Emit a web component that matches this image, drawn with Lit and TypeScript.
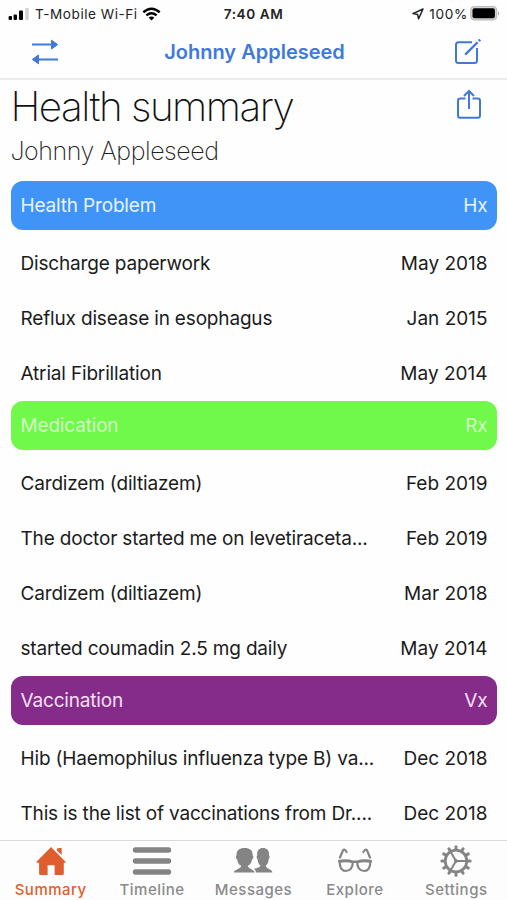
import { LitElement, html, css, svg } from "lit";
import { customElement, property } from "lit/decorators.js";

interface Entry { text: string; date: string; }
interface Group { name: string; code: string; tone: string; entries: Entry[]; }

const GROUPS: Group[] = [
  { name: "Health Problem", code: "Hx", tone: "blue", entries: [
    { text: "Discharge paperwork", date: "May 2018" },
    { text: "Reflux disease in esophagus", date: "Jan 2015" },
    { text: "Atrial Fibrillation", date: "May 2014" },
  ] },
  { name: "Medication", code: "Rx", tone: "green", entries: [
    { text: "Cardizem (diltiazem)", date: "Feb 2019" },
    { text: "The doctor started me on levetiraceta...", date: "Feb 2019" },
    { text: "Cardizem (diltiazem)", date: "Mar 2018" },
    { text: "started coumadin 2.5 mg daily", date: "May 2014" },
  ] },
  { name: "Vaccination", code: "Vx", tone: "purple", entries: [
    { text: "Hib (Haemophilus influenza type B) va...", date: "Dec 2018" },
    { text: "This is the list of vaccinations from Dr....", date: "Dec 2018" },
  ] },
];

@customElement("status-bar")
class StatusBar extends LitElement {
  static styles = css`
    :host { display: grid; grid-template-columns: 1fr auto 1fr; align-items: center; height: 27px; box-sizing: border-box; padding: 0 7px 0 7px; font-size: 13.6px; color: #222; white-space: nowrap; }
    .side { display: flex; align-items: center; }
    .right { justify-content: flex-end; }
    .time { font-weight: 600; font-size: 13.6px; letter-spacing: 0.55px; }
    .carrier { margin: 0 4px 0 6px; letter-spacing: 0.52px; }
    .percent { margin: 0 2px 0 5px; letter-spacing: 0.7px; }
    svg { display: block; flex: none; }
  `;
  render() {
    return html`
      <div class="side">
        <svg width="22" height="14" viewBox="0 0 22 14">
          <rect x="1.6" y="9" width="3.4" height="4" rx="1"/><rect x="6.6" y="7.4" width="3.4" height="5.6" rx="1"/>
          <rect x="12" y="3.4" width="4" height="9.6" rx="1"/><rect x="18.2" y="1" width="3.6" height="12" rx="1" fill="#d2d2d2"/>
        </svg>
        <span class="carrier">T-Mobile Wi-Fi</span>
        <svg width="19" height="14" viewBox="0 0 19 14" fill="none" stroke="#000" stroke-width="2.5">
          <path d="M1.3 5.2Q9.5 -1.7 17.7 5.2"/><path d="M4.4 8.4Q9.5 4.2 14.6 8.4"/><path d="M9.5 13.4L6.6 10.5Q9.5 8.4 12.4 10.5Z" fill="#000" stroke="none"/>
        </svg>
      </div>
      <span class="time">7:40 AM</span>
      <div class="side right">
        <svg width="12" height="12" viewBox="0 0 12 12" fill="none" stroke="#222" stroke-width="1.5" stroke-linejoin="round"><path d="M11 1L1 5.6L5.6 6.4L6.6 10.8Z"/></svg>
        <span class="percent">100%</span>
        <svg width="30" height="15" viewBox="0 0 30 15"><rect x=".7" y=".4" width="26" height="13.6" rx="3.6" fill="#d4d4d4" stroke="#b4b4b4" stroke-width="1"/><rect x="2.5" y="2.2" width="22.4" height="10" rx="2" fill="#000"/><path d="M28 5Q30.2 7.3 28 9.8Z" fill="#aaa"/></svg>
      </div>`;
  }
}

@customElement("summary-group")
class SummaryGroup extends LitElement {
  @property({ attribute: false }) group!: Group;
  static styles = css`
    :host { display: block; font-size: 19px; letter-spacing: -0.17px; }
    .head, .row { display: flex; justify-content: space-between; align-items: center; white-space: nowrap; padding: 0 9.5px 0 10px; box-sizing: border-box; }
    .date { letter-spacing: 0; }
    .head { height: 49px; margin-bottom: 6px; border-radius: 12px; color: #e8f3ff; }
    .blue { background: #4093f7; }
    .green { background: #70f84a; color: #d2fdc6; }
    .purple { background: #852b8a; color: #f5e0f6; }
    .row { height: 55px; color: #1b1b1b; }
  `;
  render() {
    const g = this.group;
    return html`
      <div class="head ${g.tone}"><span>${g.name}</span><span>${g.code}</span></div>
      ${g.entries.map(e => html`<div class="row"><span>${e.text}</span><span class="date">${e.date}</span></div>`)}`;
  }
}

const TEETH = Array.from({ length: 12 }, (_, i) => i * 30);

const TABS = [
  { label: "Summary", icon: svg`<path d="M20 2L35 17.2L32.8 18V28.5Q32.8 30 31.3 30H23.6V20.3H16.6V30H9.6Q8.1 30 8.1 28.5V18L5 17.2ZM25.8 3.6L30.7 2.7V10L25.8 5.5Z" fill="#df5d2e"/>` },
  { label: "Timeline", icon: svg`<path d="M3.5 5H36.5M3.5 16H36.5M3.5 27H36.5" stroke="#848484" stroke-width="5.4" stroke-linecap="round"/>` },
  { label: "Messages", icon: svg`<g fill="#848484"><path d="M0.8 27.6C0.8 24.6 8 24.2 8.2 20.8C5.4 19.6 4.6 17.5 4.2 14.6C2.4 13.4 2.6 11 3.6 10.2C3.2 5.5 6.5 3 11.6 3S20 5.5 19.6 10.2C20.6 11 20.8 13.4 19 14.6C18.6 17.5 17.6 19.6 14.8 20.8C15 24.2 21.8 24.6 21.8 27.6Z"/><path d="M23 27.6C22.8 25 21.6 24.4 20.8 24C24 23 27 22.6 27.4 20.6C25.6 19 24.8 17 24.6 14.4C23.4 13.2 23.4 11 24.2 10.2C23.8 5.6 26 3 30 3S36.4 5.6 36 10.2C36.8 11 36.8 13.2 35.6 14.4C35.4 17 34.6 19 32.8 20.6C33 24.2 39.4 24.2 39.4 27.6Z"/></g>` },
  { label: "Explore", icon: svg`<g fill="none" stroke="#848484" stroke-width="2.2"><path d="M5 12.5L8 5.4Q9.5 3.4 11.6 7M35 12.5L32 5.4Q30.5 3.4 28.4 7" stroke-linecap="round"/><path d="M4.6 16.8Q11 15.4 17.8 17C18 22.6 15 26 10.8 26S4.7 22.6 4.6 16.8ZM35.4 16.8Q29 15.4 22.2 17C22 22.6 25 26 29.2 26S35.3 22.6 35.4 16.8Z"/><path d="M3.2 16.2Q12 14.6 18 16.8H22Q28 14.6 36.8 16.2" stroke-width="2.4"/></g>` },
  { label: "Settings", icon: svg`<g fill="none" stroke="#848484"><circle cx="20" cy="16" r="10.8" stroke-width="2.8"/><path d="M20 16H30.5M20 16L14.7 6.9M20 16L14.7 25.1" stroke-width="2"/><circle cx="20" cy="16" r="1.4" fill="#848484"/>${TEETH.map(a => svg`<path d="M20 4V1.8" stroke-width="3" stroke-linecap="round" transform="rotate(${a} 20 16)"/>`)}</g>` },
];

@customElement("tab-bar")
class TabBar extends LitElement {
  static styles = css`
    :host { display: grid; grid-template-columns: repeat(5, 1fr); height: 60px; box-sizing: border-box; border-top: 1.5px solid #dadada; background: #fdfdfd; }
    .tab { display: flex; flex-direction: column; align-items: center; padding-top: 4px; color: #8a8a8a; font-size: 15px; font-weight: 550; line-height: 18px; letter-spacing: 0.5px; }
    .tab svg { display: block; margin-bottom: 4px; overflow: visible; }
    .active { color: #df5d2e; }
  `;
  render() {
    return TABS.map((t, i) => html`<div class="tab ${i === 0 ? "active" : ""}"><svg width="40" height="32" viewBox="0 0 40 32">${t.icon}</svg><span>${t.label}</span></div>`);
  }
}

@customElement("app-root")
class AppRoot extends LitElement {
  static styles = css`
    :host { display: flex; flex-direction: column; height: 900px; overflow: hidden; background: #fefefe; font-family: Inter, "Liberation Sans", sans-serif; }
    svg { display: block; fill: none; stroke: #3f79d9; stroke-width: 2; }
    .nav { display: flex; justify-content: space-between; align-items: center; height: 53px; box-sizing: border-box; padding: 0 25px 2px 31px; border-bottom: 2px solid #ebebeb; flex: none; }
    .nav h1 { margin: 0 4px 0 0; font-size: 20px; font-weight: 570; color: #3f79d9; letter-spacing: 0; }
    .content { flex: 1; min-height: 0; overflow: hidden; padding: 0 10px 0 10.5px; }
    .top { display: flex; justify-content: space-between; height: 100.6px; white-space: nowrap; }
    .top svg { margin: 9px 15px 0 0; }
    h2, h3 { margin: 0; font-weight: 200; }
    h2 { font-size: 40.5px; line-height: 53px; letter-spacing: -1.55px; color: #111; }
    h3 { font-size: 25px; line-height: 36px; letter-spacing: -0.45px; color: #222; }
  `;
  render() {
    return html`
      <status-bar></status-bar>
      <div class="nav">
        <svg width="28" height="26" viewBox="0 0 28 26"><path d="M1 5.6H22M6 20.4H27"/><path d="M20.5 1.2L26.7 5.6L20.5 10ZM7.5 16L1.3 20.4L7.5 24.8Z" fill="#3f79d9" stroke-width="1"/></svg>
        <h1>Johnny Appleseed</h1>
        <svg width="28" height="28" viewBox="0 0 28 28"><path d="M18 4.2H4.5Q2 4.2 2 6.7V22.5Q2 25 4.5 25H20.5Q23 25 23 22.5V10"/><path d="M11.2 16.6L23.6 4.2" stroke-width="2.3"/><path d="M24.8 3L26.2 1.6" stroke-width="2.6"/></svg>
      </div>
      <div class="content">
        <div class="top">
          <div><h2>Health summary</h2><h3>Johnny Appleseed</h3></div>
          <svg width="26" height="32" viewBox="0 0 26 32"><path d="M9.5 9.4H4.3Q2 9.4 2 11.7V26.5Q2 28.8 4.3 28.8H21.7Q24 28.8 24 26.5V11.7Q24 9.4 21.7 9.4H16.5"/><path d="M13 20V2M8 7L13 2L18 7"/></svg>
        </div>
        ${GROUPS.map(g => html`<summary-group .group=${g}></summary-group>`)}
      </div>
      <tab-bar></tab-bar>`;
  }
}
